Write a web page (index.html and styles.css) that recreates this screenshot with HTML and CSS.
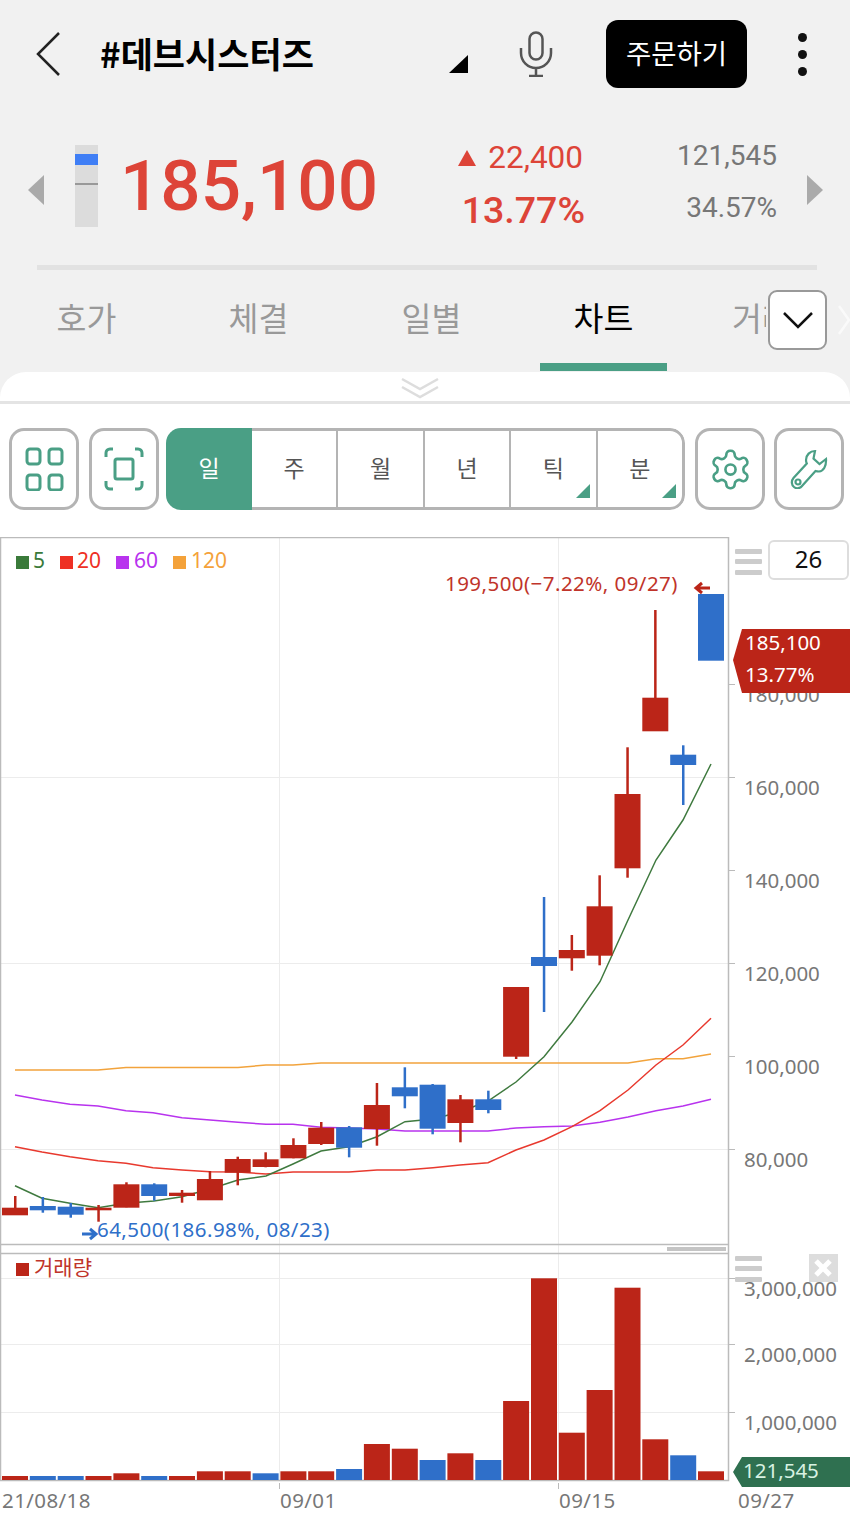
FILE: index.html
```html
<!DOCTYPE html>
<html lang="ko">

<head>
    <meta charset="UTF-8">
    <meta name="viewport" content="width=device-width, initial-scale=1.0">
    <title>#데브시스터즈 차트</title>

    <link rel="stylesheet" href="styles.css">
</head>

<body>
    <div class="quote">
        <div class="topbar">
            <svg class="back" width="24" height="44" viewBox="0 0 24 44"><path d="M23 1 2 22l21 21" /></svg>
            <h1 class="title">#데브시스터즈</h1>
            <span class="corner"></span>
            <svg class="mic" width="34" height="46" viewBox="0 0 34 46">
                <rect x="10.5" y="1.5" width="13" height="27" rx="6.5" />
                <path d="M2 17v5a15 15 0 0 0 30 0v-5M17 37v8M10 45h14" />
            </svg>
            <button class="order">주문하기</button>
            <div class="dots"><i></i><i></i><i></i></div>
        </div>

        <div class="price-row">
            <span class="nav-left"></span>
            <div class="gauge"><i class="gauge-blue"></i><i class="gauge-line"></i></div>
            <div class="price">185,100</div>
            <div class="change">
                <div class="change-top"><i class="up"></i>22,400</div>
                <div class="change-rate">13.77%</div>
            </div>
            <div class="volume">
                <div>121,545</div>
                <div class="volume-rate">34.57%</div>
            </div>
            <span class="nav-right"></span>
        </div>

        <div class="rule"></div>

        <div class="tabs">
            <div class="tab">호가</div>
            <div class="tab">체결</div>
            <div class="tab">일별</div>
            <div class="tab active">차트</div>
            <div class="tab cut">거래</div>
            <button class="more">
                <svg width="30" height="17" viewBox="0 0 30 17"><path d="M1 1l14 14L29 1" /></svg>
            </button>
            <svg class="tab-next" width="12" height="30" viewBox="0 0 12 30"><path d="M1 1l10 14L1 29" /></svg>
        </div>
    </div>

    <div class="sheet">
        <div class="handle">
            <svg width="40" height="22" viewBox="0 0 40 22"><path d="M2 2l18 10L38 2M2 10l18 10 18-10" /></svg>
        </div>

        <div class="toolbar">
            <button class="tool">
                <svg width="40" height="44" viewBox="0 0 40 44">
                    <rect x="3" y="2" width="13" height="15" rx="3" />
                    <rect x="25" y="2" width="13" height="15" rx="3" />
                    <rect x="3" y="28" width="13" height="15" rx="3" />
                    <rect x="25" y="28" width="13" height="15" rx="3" />
                </svg>
            </button>
            <button class="tool">
                <svg width="40" height="44" viewBox="0 0 40 44">
                    <path d="M2 10V6a4 4 0 0 1 4-4h3M31 2h3a4 4 0 0 1 4 4v4M38 34v4a4 4 0 0 1-4 4h-3M9 42H6a4 4 0 0 1-4-4v-4" />
                    <rect x="11" y="12" width="18" height="20" rx="2" />
                </svg>
            </button>
            <div class="periods">
                <div class="period on">일</div>
                <div class="period">주</div>
                <div class="period">월</div>
                <div class="period">년</div>
                <div class="period sub">틱</div>
                <div class="period sub">분</div>
            </div>
            <button class="tool">
                <svg width="45" height="45" viewBox="0 0 24 24">
                    <path class="thin" d="M12.22 2h-.44a2 2 0 0 0-2 2v.18a2 2 0 0 1-1 1.73l-.43.25a2 2 0 0 1-2 0l-.15-.08a2 2 0 0 0-2.73.73l-.22.38a2 2 0 0 0 .73 2.73l.15.1a2 2 0 0 1 1 1.72v.51a2 2 0 0 1-1 1.74l-.15.09a2 2 0 0 0-.73 2.73l.22.38a2 2 0 0 0 2.73.73l.15-.08a2 2 0 0 1 2 0l.43.25a2 2 0 0 1 1 1.73V20a2 2 0 0 0 2 2h.44a2 2 0 0 0 2-2v-.18a2 2 0 0 1 1-1.73l.43-.25a2 2 0 0 1 2 0l.15.08a2 2 0 0 0 2.73-.73l.22-.39a2 2 0 0 0-.73-2.73l-.15-.08a2 2 0 0 1-1-1.74v-.5a2 2 0 0 1 1-1.74l.15-.09a2 2 0 0 0 .73-2.73l-.22-.38a2 2 0 0 0-2.73-.73l-.15.08a2 2 0 0 1-2 0l-.43-.25a2 2 0 0 1-1-1.73V4a2 2 0 0 0-2-2z" />
                    <circle class="thin" cx="12" cy="12" r="2.7" />
                </svg>
            </button>
            <button class="tool">
                <svg width="38" height="40" viewBox="0 0 38 40">
                    <path class="fine" d="M25 2C20 2 16 6 16 11c0 1.500.3 2.500.8 3.500L3.500 29c-2.500 3-2 7 .5 9s6 1.500 8-1l13.500-15c1.500.5 2.500.5 3.500.5 4.500-.5 7.500-5.500 7-12.500l-6.500 5-6-5.500z" />
                    <circle class="fine" cx="8" cy="33" r="2.500" />
                </svg>
            </button>
        </div>

        <div class="chart">
            <svg class="plot" width="850" height="985" viewBox="0 537 850 985">
                <!-- frame and grid -->
                <g class="grid">
                    <path d="M0 777.500H728M0 963.500H728M0 1149.500H728" />
                    <path d="M0 1278.500H728M0 1344.500H728M0 1412.500H728" />
                    <path d="M279.500 538V1480M558.500 538V1480" />
                </g>
                <path class="frame" d="M.5 1480V537.500H728.500V1480.500H0M0 1244.500H728M0 1253.500H728" />
                <path class="tick" d="M728 684.500h7M728 777.500h7M728 870.500h7M728 963.500h7M728 1056.500h7M728 1149.500h7M728 1278.500h7M728 1344.500h7M728 1412.500h7M279.500 1483v6M558.500 1483v6" />
                <rect class="thumb" x="667" y="1247" width="59" height="4" />

                <!-- moving averages -->
                <polyline class="ma ma120" points="15,1070 98,1070 126,1067.500 238,1067.500 266,1065 293,1065 321,1063 628,1063 656,1058.700 683,1058.700 711,1054" />
                <polyline class="ma ma60" points="15,1095 42,1100 70,1104.300 98,1106 126,1110.700 153,1112.700 182,1117.700 210,1120 238,1122.300 266,1124.300 293,1124.300 321,1127.300 349,1128 377,1129 405,1131 488,1131 516,1128 544,1126.700 572,1126 600,1122.300 628,1117 656,1110.700 683,1106 711,1099.300" />
                <polyline class="ma ma20" points="15,1146.700 42,1152 70,1156.700 98,1160.700 126,1163.300 153,1167.700 182,1170 210,1171.700 238,1172 266,1174 293,1172 349,1172 377,1170 405,1170 433,1167.700 460,1165 488,1162.700 516,1150 544,1140 572,1126.700 600,1110.700 628,1090 656,1065 683,1045 711,1018.300" />
                <polyline class="ma ma5" points="15,1185.700 42,1198.300 70,1203.300 98,1207.700 126,1203.300 154,1201 182,1196.700 210,1189 238,1180 266,1176 293,1164 321,1151 349,1146.700 377,1136.700 405,1121.700 433,1119 460,1112 488,1101 516,1082 544,1056.700 572,1022 600,981.700 628,920 656,860 683,820 711,764" />

                <!-- candles: wick, then body -->
                <g class="up-c">
                    <rect x="14" y="1196" width="2.500" height="19" /><rect x="2" y="1207.700" width="26" height="7.600" />
                    <rect x="97.300" y="1205" width="2.500" height="16.700" /><rect x="85.500" y="1207.700" width="26" height="2.600" />
                    <rect x="125.200" y="1182.300" width="2.500" height="25" /><rect x="113.400" y="1184.300" width="26" height="23.400" />
                    <rect x="180.800" y="1190" width="2.500" height="12.700" /><rect x="169" y="1192.700" width="26" height="3.300" />
                    <rect x="208.700" y="1171" width="2.500" height="29" /><rect x="196.900" y="1179" width="26" height="21.300" />
                    <rect x="236.500" y="1156.700" width="2.500" height="28.600" /><rect x="224.700" y="1159" width="26" height="13.700" />
                    <rect x="264.400" y="1152.300" width="2.500" height="15" /><rect x="252.600" y="1159.300" width="26" height="7.700" />
                    <rect x="292.200" y="1138.300" width="2.500" height="20" /><rect x="280.400" y="1145" width="26" height="13.300" />
                    <rect x="320" y="1122" width="2.500" height="23" /><rect x="308.200" y="1127.700" width="26" height="16.300" />
                    <rect x="375.700" y="1083" width="2.500" height="62.700" /><rect x="363.900" y="1105" width="26" height="24" />
                    <rect x="459.200" y="1095" width="2.500" height="47.300" /><rect x="447.400" y="1099.300" width="26" height="23.700" />
                    <rect x="514.900" y="987" width="2.500" height="72" /><rect x="503.100" y="987" width="26" height="69.700" />
                    <rect x="570.600" y="935" width="2.500" height="35.700" /><rect x="558.800" y="950" width="26" height="8.300" />
                    <rect x="598.400" y="875.300" width="2.500" height="90" /><rect x="586.600" y="906.300" width="26" height="49.400" />
                    <rect x="626.300" y="747.300" width="2.500" height="130.400" /><rect x="614.500" y="794" width="26" height="74.300" />
                    <rect x="654.100" y="610" width="2.500" height="100" /><rect x="642.300" y="697.700" width="26" height="33.600" />
                </g>
                <g class="down-c">
                    <rect x="41.600" y="1197" width="2.500" height="15.700" /><rect x="29.800" y="1206" width="26" height="4.300" />
                    <rect x="69.500" y="1203" width="2.500" height="14.700" /><rect x="57.700" y="1206.700" width="26" height="8" />
                    <rect x="153" y="1183.300" width="2.500" height="17.400" /><rect x="141.200" y="1184.300" width="26" height="11.700" />
                    <rect x="347.900" y="1126" width="2.500" height="31.300" /><rect x="336.100" y="1127.300" width="26" height="20.400" />
                    <rect x="403.600" y="1067.300" width="2.500" height="41" /><rect x="391.800" y="1087.300" width="26" height="9" />
                    <rect x="431.400" y="1084" width="2.500" height="50.300" /><rect x="419.600" y="1084.700" width="26" height="44" />
                    <rect x="487.100" y="1090.700" width="2.500" height="22.600" /><rect x="475.300" y="1099.300" width="26" height="10.700" />
                    <rect x="542.800" y="897" width="2.500" height="115" /><rect x="531" y="957" width="26" height="9" />
                    <rect x="682" y="745.300" width="2.500" height="59.700" /><rect x="670.200" y="754.700" width="26" height="10.300" />
                    <rect x="698" y="594" width="26" height="66.700" />
                </g>

                <!-- volume bars -->
                <g class="up-c">
                    <rect x="2" y="1476" width="26" height="4" />
                    <rect x="85.500" y="1476" width="26" height="4" />
                    <rect x="113.400" y="1473.300" width="26" height="6.700" />
                    <rect x="169" y="1476" width="26" height="4" />
                    <rect x="196.900" y="1471.300" width="26" height="8.700" />
                    <rect x="224.700" y="1471.300" width="26" height="8.700" />
                    <rect x="280.400" y="1471.300" width="26" height="8.700" />
                    <rect x="308.200" y="1471.300" width="26" height="8.700" />
                    <rect x="363.900" y="1444" width="26" height="36" />
                    <rect x="391.800" y="1448.700" width="26" height="31.300" />
                    <rect x="447.400" y="1453.300" width="26" height="26.700" />
                    <rect x="503.100" y="1401" width="26" height="79" />
                    <rect x="531" y="1278.300" width="26" height="201.700" />
                    <rect x="558.800" y="1432.700" width="26" height="47.300" />
                    <rect x="586.600" y="1390" width="26" height="90" />
                    <rect x="614.500" y="1287.700" width="26" height="192.300" />
                    <rect x="642.300" y="1439.300" width="26" height="40.700" />
                    <rect x="698" y="1471.300" width="26" height="8.700" />
                </g>
                <g class="down-c">
                    <rect x="29.800" y="1476" width="26" height="4" />
                    <rect x="57.700" y="1476" width="26" height="4" />
                    <rect x="141.200" y="1476" width="26" height="4" />
                    <rect x="252.600" y="1473.300" width="26" height="6.700" />
                    <rect x="336.100" y="1469" width="26" height="11" />
                    <rect x="419.600" y="1460" width="26" height="20" />
                    <rect x="475.300" y="1460" width="26" height="20" />
                    <rect x="670.200" y="1455.300" width="26" height="24.700" />
                </g>

                <!-- legends -->
                <rect class="k5" x="16" y="556" width="13" height="13" /><text class="lg k5" x="33" y="568">5</text>
                <rect class="k20" x="60" y="556" width="13" height="13" /><text class="lg k20" x="77" y="568">20</text>
                <rect class="k60" x="116" y="556" width="13" height="13" /><text class="lg k60" x="134" y="568">60</text>
                <rect class="k120" x="173" y="556" width="13" height="13" /><text class="lg k120" x="191" y="568">120</text>
                <rect class="up-c" x="16" y="1263" width="13" height="13" /><text class="lg up-t" x="34" y="1275">거래량</text>

                <!-- high / low notes -->
                <text class="note up-t" x="445" y="591">199,500(−7.22%, 09/27)</text>
                <path class="note-arrow up-l" d="M710 588h-14m6-5-6 5 6 5" />
                <path class="note-arrow down-l" d="M82 1234h14m-6-5 6 5-6 5" />
                <text class="note down-t" x="97" y="1237">64,500(186.98%, 08/23)</text>

                <!-- axis labels -->
                <text class="axis" x="744" y="702">180,000</text>
                <text class="axis" x="744" y="795">160,000</text>
                <text class="axis" x="744" y="888">140,000</text>
                <text class="axis" x="744" y="981">120,000</text>
                <text class="axis" x="744" y="1074">100,000</text>
                <text class="axis" x="744" y="1167">80,000</text>
                <text class="axis" x="744" y="1296">3,000,000</text>
                <text class="axis" x="744" y="1362">2,000,000</text>
                <text class="axis" x="744" y="1430">1,000,000</text>
                <text class="axis date" x="2" y="1508">21/08/18</text>
                <text class="axis date" x="280" y="1508">09/01</text>
                <text class="axis date" x="559" y="1508">09/15</text>
                <text class="axis date" x="738" y="1508">09/27</text>

                <!-- last price tags -->
                <polygon class="tag-red" points="850,629 742,629 733,660 742,693 850,693" />
                <text class="tag-txt" x="745" y="650">185,100</text>
                <text class="tag-txt" x="745" y="682">13.77%</text>
                <polygon class="tag-green" points="850,1457 742,1457 733,1472 742,1487 850,1487" />
                <text class="tag-txt light" x="743" y="1478">121,545</text>

                <!-- side controls -->
                <g class="bars">
                    <rect x="735" y="549" width="27" height="5" rx="1" /><rect x="735" y="559" width="27" height="5" rx="1" /><rect x="735" y="570" width="27" height="5" rx="1" />
                    <rect x="735" y="1256" width="27" height="5" rx="1" /><rect x="735" y="1266" width="27" height="5" rx="1" /><rect x="735" y="1277" width="27" height="5" rx="1" />
                </g>
                <rect class="close-box" x="809" y="1254" width="29" height="28" />
                <path class="close-x" d="M816 1261l14 14M830 1261l-14 14" />
            </svg>
            <div class="count">26</div>
        </div>
    </div>
</body>

</html>
```

FILE: styles.css
```css
* {
    box-sizing: border-box;
}

body {
    margin: 0;
    width: 850px;
    height: 1522px;
    overflow: hidden;
    background-color: #fff;
    font-family: Roboto, "Noto Sans CJK KR", sans-serif;
}

button {
    font-family: inherit;
    padding: 0;
}

.quote {
    height: 400px;
    background-color: #f1f1f1;
}

/* top bar */
.topbar {
    display: flex;
    align-items: center;
    height: 108px;
    padding-left: 36px;
}

.back path {
    fill: none;
    stroke: #222;
    stroke-width: 2.5;
}

.title {
    margin: 0 0 3px 40px;
    width: 349px;
    font-family: "Noto Sans CJK KR", sans-serif;
    font-size: 35px;
    font-weight: 700;
    color: #000;
}

.corner {
    width: 0;
    height: 0;
    margin-top: 20px;
    border-left: 19px solid transparent;
    border-bottom: 18px solid #000;
}

.mic {
    margin-left: 51px;
}

.mic rect,
.mic path {
    fill: none;
    stroke: #555;
    stroke-width: 2.5;
}

.order {
    width: 141px;
    height: 68px;
    margin-left: 53px;
    padding-bottom: 4px;
    border: none;
    border-radius: 12px;
    background-color: #000;
    color: #fff;
    font-family: "Noto Sans CJK KR", sans-serif;
    font-size: 27.5px;
}

.dots {
    display: flex;
    flex-direction: column;
    gap: 8px;
    margin-left: 51px;
}

.dots i {
    width: 9px;
    height: 9px;
    border-radius: 50%;
    background-color: #111;
}

/* price row */
.price-row {
    display: flex;
    align-items: center;
    height: 157px;
    padding-left: 28px;
    padding-bottom: 2px;
    color: #dd4438;
}

.nav-left,
.nav-right {
    width: 0;
    height: 0;
    border-top: 15px solid transparent;
    border-bottom: 15px solid transparent;
}

.nav-left {
    border-right: 16px solid #aaa;
    margin-top: 8px;
}

.nav-right {
    border-left: 16px solid #aaa;
    margin-top: 8px;
    margin-left: 30px;
}

.gauge {
    position: relative;
    width: 23px;
    height: 82px;
    margin-left: 31px;
    background-color: #dcdcdc;
}

.gauge-blue {
    position: absolute;
    top: 9px;
    left: 0;
    width: 100%;
    height: 11px;
    background-color: #3f7ef5;
}

.gauge-line {
    position: absolute;
    top: 38px;
    left: 0;
    width: 100%;
    height: 2px;
    background-color: #999;
}

.price {
    width: 337px;
    margin-left: 22px;
    font-size: 71px;
    font-weight: 500;
}

.change {
    width: 128px;
    text-align: right;
}

.change-top {
    display: flex;
    align-items: center;
    justify-content: flex-end;
    font-size: 31.5px;
    margin-right: 2px;
}

.up {
    width: 0;
    height: 0;
    margin-right: 12px;
    border-left: 9px solid transparent;
    border-right: 9px solid transparent;
    border-bottom: 16px solid #dd4438;
}

.change-rate {
    margin-top: 12px;
    font-size: 37.5px;
    font-weight: 500;
}

.volume {
    width: 192px;
    margin-bottom: 9px;
    text-align: right;
    font-size: 28px;
    color: #777;
}

.volume-rate {
    margin-top: 19px;
}

.rule {
    width: 780px;
    height: 5px;
    margin-left: 37px;
    background-color: #e2e2e2;
}

/* tabs */
.tabs {
    position: relative;
    height: 102px;
    font-family: "Noto Sans CJK KR", sans-serif;
    font-size: 32.5px;
    color: #999;
}

.tab {
    position: absolute;
    top: 0;
    height: 101px;
    width: 127px;
    padding-top: 23px;
    text-align: center;
}

.tab:nth-child(1) { left: 23px; }
.tab:nth-child(2) { left: 195px; }
.tab:nth-child(3) { left: 368px; }
.tab:nth-child(4) { left: 540px; }

.tab.active {
    color: #000;
    border-bottom: 8px solid #4a9f85;
}

.tab.cut {
    left: 732px;
    width: 34px;
    overflow: hidden;
    text-align: left;
    white-space: nowrap;
}

.more {
    position: absolute;
    top: 20px;
    left: 768px;
    width: 59px;
    height: 60px;
    padding-top: 5px;
    border: 2px solid #999;
    border-radius: 9px;
    background-color: #fff;
}

.more path,
.tab-next path {
    fill: none;
    stroke: #111;
    stroke-width: 2.5;
}

.tab-next {
    position: absolute;
    top: 35px;
    left: 838px;
}

.tab-next path {
    stroke: #fafafa;
}

/* white sheet */
.sheet {
    position: absolute;
    top: 372px;
    left: 0;
    width: 850px;
    height: 1150px;
    border-radius: 26px 26px 0 0;
    background-color: #fff;
}

.handle {
    height: 32px;
    padding-top: 5px;
    text-align: center;
    border-bottom: 3px solid #e4e4e4;
}

.handle svg {
    margin-right: 10px;
}

.handle path {
    fill: none;
    stroke: #ddd;
    stroke-width: 2.5;
}

.toolbar {
    display: flex;
    height: 82px;
    margin-top: 24px;
    padding-left: 9px;
}

.tool {
    display: flex;
    flex: none;
    align-items: center;
    justify-content: center;
    width: 70px;
    height: 82px;
    margin-right: 10px;
    border: 3px solid #b4b4b4;
    border-radius: 15px;
    background-color: #fff;
}

.tool:nth-child(2) {
    margin-right: 7px;
}

.tool:nth-child(4) {
    margin-right: 9px;
}

.tool svg * {
    fill: none;
    stroke: #4a9f85;
    stroke-width: 3;
}

.tool svg .thin {
    stroke-width: 1.400;
}

.tool svg .fine {
    stroke-width: 2.2;
}

.periods {
    display: flex;
    flex: none;
    width: 519px;
    height: 82px;
    margin-right: 10px;
    border-radius: 15px;
    overflow: hidden;
    font-family: "Noto Sans CJK KR", sans-serif;
    font-size: 23px;
    color: #555;
}

.period {
    position: relative;
    flex: 1;
    display: flex;
    align-items: center;
    justify-content: center;
    border-top: 3px solid #b4b4b4;
    border-bottom: 3px solid #b4b4b4;
    padding-bottom: 4px;
}

.period + .period + .period {
    border-left: 2.500px solid #b4b4b4;
}

.period:last-child {
    border-right: 3px solid #b4b4b4;
    border-radius: 0 15px 15px 0;
}

.period.on {
    flex: none;
    width: 86px;
    border: none;
    background-color: #4a9f85;
    color: #fff;
}

.period.sub::after {
    content: "";
    position: absolute;
    right: 6px;
    bottom: 9px;
    border-left: 14px solid transparent;
    border-bottom: 14px solid #4a9f85;
}

/* chart */
.chart {
    position: absolute;
    top: 165px;
    left: 0;
}

.plot {
    display: block;
}

.grid path {
    fill: none;
    stroke: #ececec;
    stroke-width: 1;
}

.frame {
    fill: none;
    stroke: #bbb;
    stroke-width: 1.500;
}

.tick {
    fill: none;
    stroke: #bbb;
    stroke-width: 1;
}

.thumb {
    fill: #c4c4c4;
}

.ma {
    fill: none;
    stroke-width: 1.500;
}

.ma5 { stroke: #3f7a3f; }
.ma20 { stroke: #e8392e; }
.ma60 { stroke: #b833ee; }
.ma120 { stroke: #f2a33c; }

.up-c { fill: #bb2518; }
.down-c { fill: #2f6fc9; }
.up-t { fill: #c0342a; }
.down-t { fill: #2f6fc9; }

.k5 { fill: #3a7a3a; }
.k20 { fill: #ee3124; }
.k60 { fill: #b833ee; }
.k120 { fill: #f4a23a; }

.plot text {
    font-family: "Noto Sans", "Noto Sans CJK KR", sans-serif;
}

.lg {
    font-size: 21px;
}

.note {
    font-size: 20.500px;
    letter-spacing: 0.45px;
}

.note-arrow {
    fill: none;
    stroke-width: 3;
}

.up-l { stroke: #bb2518; }
.down-l { stroke: #2f6fc9; }

.axis {
    font-size: 20.500px;
    fill: #777;
}

.date {
    letter-spacing: 0.4px;
}

.tag-red { fill: #bb2518; }
.tag-green { fill: #2f7050; }

.tag-txt {
    font-size: 20.500px;
    fill: #fff;
}

.tag-txt.light {
    fill: #d8f2e2;
}

.bars rect {
    fill: #ccc;
}

.close-box {
    fill: #ddd;
}

.close-x {
    fill: none;
    stroke: #fff;
    stroke-width: 5;
}

.count {
    position: absolute;
    top: 3px;
    left: 768px;
    width: 81px;
    height: 40px;
    border: 2px solid #ddd;
    border-radius: 6px;
    background-color: #fff;
    font-family: "Noto Sans", sans-serif;
    font-size: 24px;
    line-height: 34px;
    text-align: center;
    color: #111;
}
```
